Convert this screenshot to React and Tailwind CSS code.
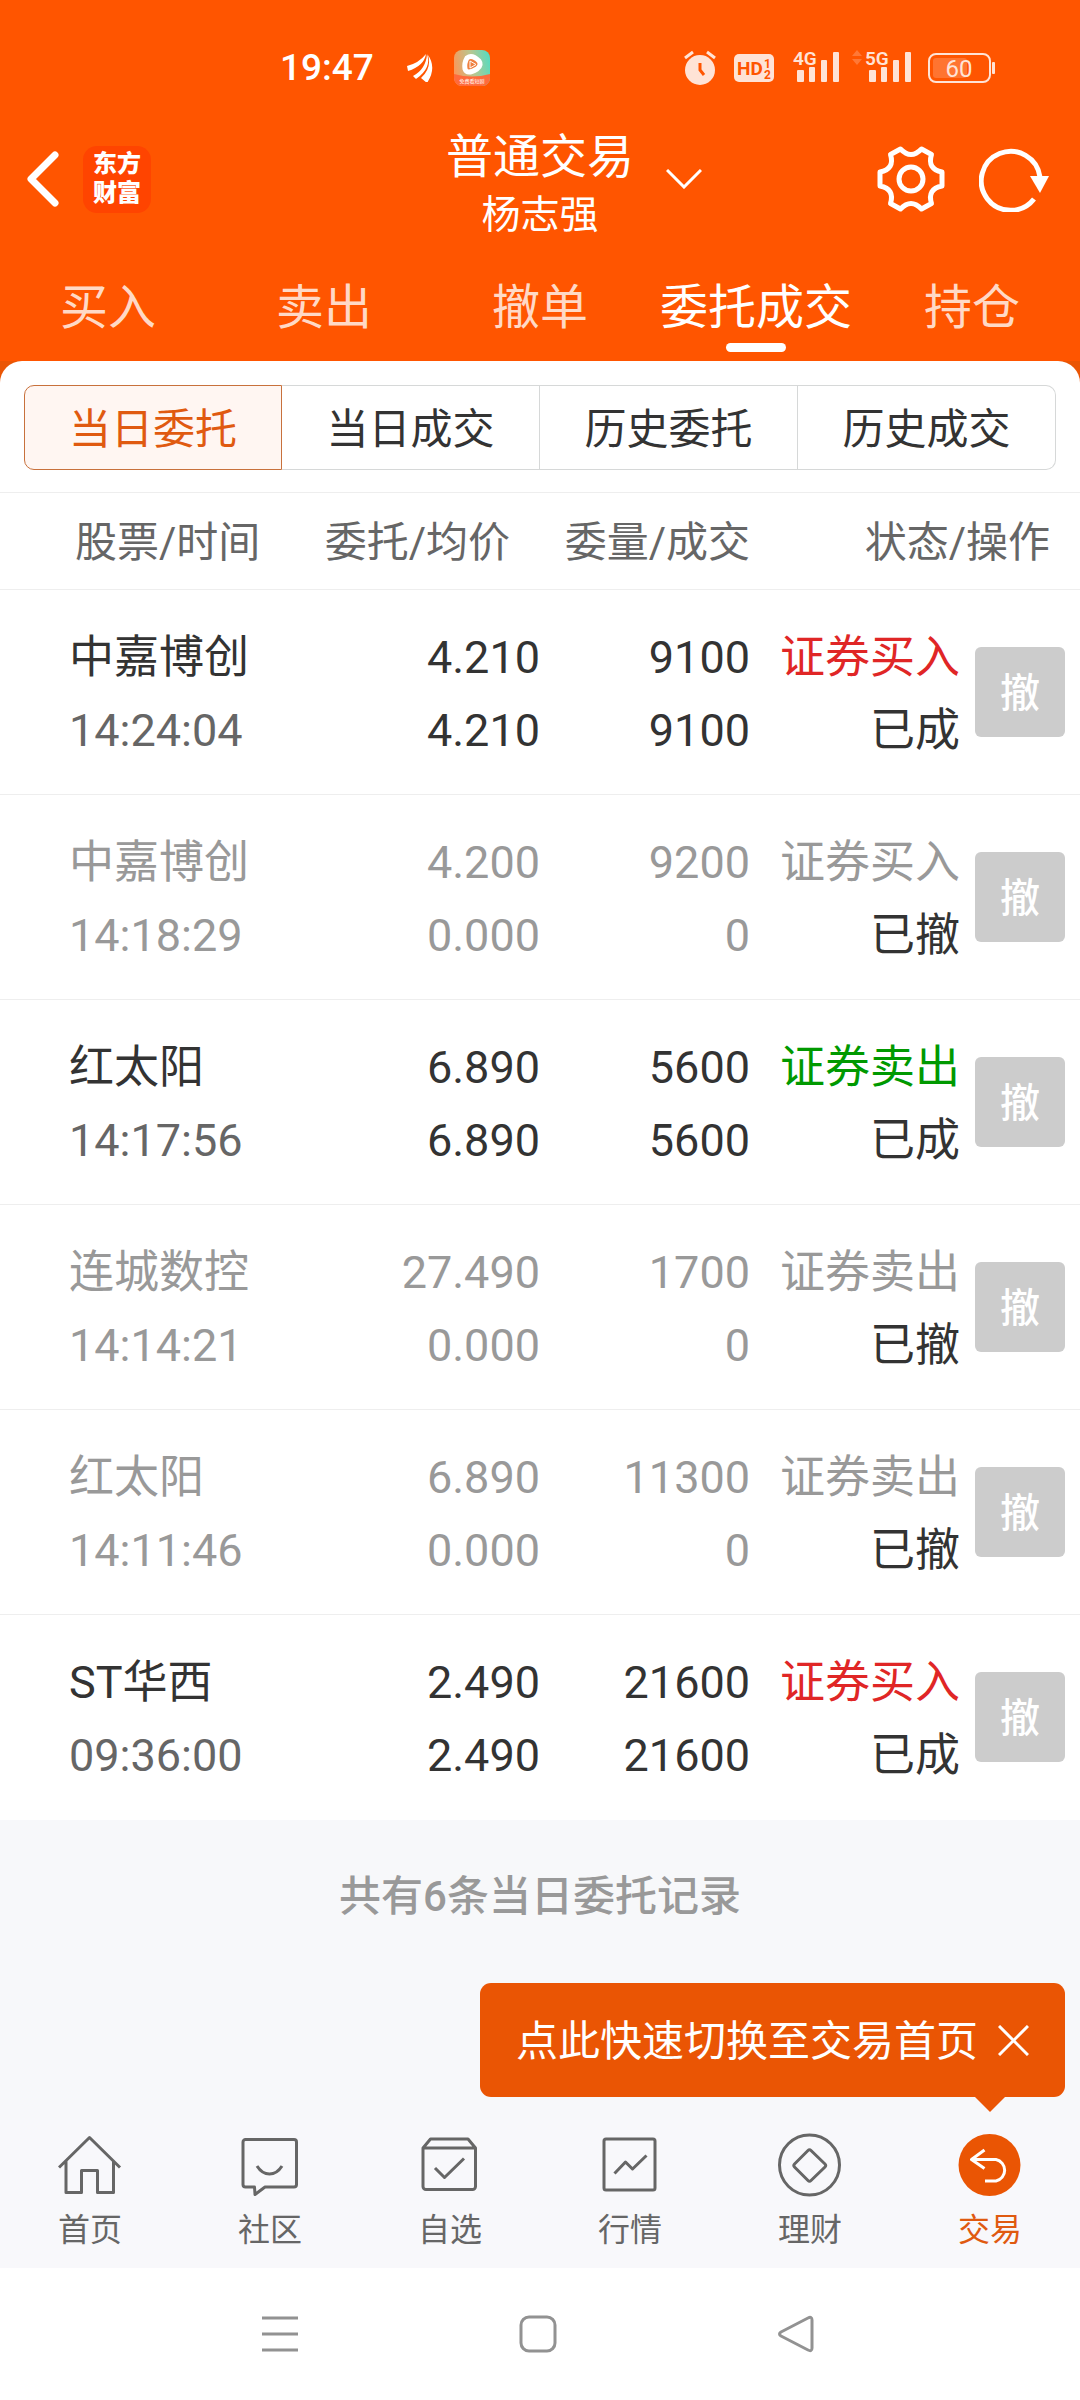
// Order list page — today's orders with cancel actions
import React, { useState } from 'react';
import clsx from 'clsx';

const TABS = ['买入', '卖出', '撤单', '委托成交', '持仓'];
const FILTERS = ['当日委托', '当日成交', '历史委托', '历史成交'];

const ORDERS = [
    { name: '中嘉博创', time: '14:24:04', price: '4.210', avg: '4.210', qty: '9100', filled: '9100', side: 'buy', done: true },
    { name: '中嘉博创', time: '14:18:29', price: '4.200', avg: '0.000', qty: '9200', filled: '0', side: 'buy', done: false },
    { name: '红太阳', time: '14:17:56', price: '6.890', avg: '6.890', qty: '5600', filled: '5600', side: 'sell', done: true },
    { name: '连城数控', time: '14:14:21', price: '27.490', avg: '0.000', qty: '1700', filled: '0', side: 'sell', done: false },
    { name: '红太阳', time: '14:11:46', price: '6.890', avg: '0.000', qty: '11300', filled: '0', side: 'sell', done: false },
    { name: 'ST华西', time: '09:36:00', price: '2.490', avg: '2.490', qty: '21600', filled: '21600', side: 'buy', done: true },
];

const NAV_ITEMS = [
    {
        label: '首页',
        icon: <path d="M1 34.5L31.5 4.5L62 34.5M8 28V59.5H23.5V37.5H39.5V59.5H55.5V28" />,
    },
    {
        label: '社区',
        icon: (
            <path d="M7.5 6.5H56a2.5 2.5 0 0 1 2.5 2.5V51.5a2.5 2.5 0 0 1-2.5 2.5H27L17 61.5L16.5 54H7.5A2.5 2.5 0 0 1 5 51.5V9a2.5 2.5 0 0 1 2.5-2.5ZM19 33Q24 41 31.5 41T44 33" />
        ),
    },
    {
        label: '自选',
        icon: (
            <path d="M5 15L12.5 6H50L57.5 15V53.5a3 3 0 0 1-3 3H8a3 3 0 0 1-3-3ZM5 15H57.5M17 35L26.5 44.5L46 25.5" />
        ),
    },
    {
        label: '行情',
        icon: (
            <>
                <rect x="6" y="6" width="51" height="51" rx="2" />
                <path d="M16.5 40.5L27.5 29L34.5 36L48.5 22.5" />
            </>
        ),
    },
    {
        label: '理财',
        icon: (
            <>
                <circle cx="31.5" cy="32" r="30" />
                <path d="M30 17.5Q31.5 16 33 17.5L47 31Q48.5 32.5 47 34L33 47.5Q31.5 49 30 47.5L16.5 34Q15 32.5 16.5 31Z" />
            </>
        ),
    },
    {
        label: '交易',
        active: true,
        icon: (
            <>
                <circle cx="31.5" cy="32" r="31" fill="#ea5504" stroke="none" />
                <path stroke="#fff" d="M26.5 17L13.5 26.5L26.5 35.5M13.5 26.5H38a11 11 0 0 1 0 21.5H27" />
            </>
        ),
    },
];

const Signal = ({ label, arrows }) => (
    <svg width="60" height="48" viewBox="0 -6 60 48" fill="currentColor">
        {arrows && <path opacity="0.25" d="M0 6L5 0L10 6ZM0 9L5 15L10 9Z" />}
        <text x="13" y="15" fontSize="19" fontWeight="600">{label}</text>
        <rect x="17" y="20" width="7" height="12" rx="1" />
        <rect x="29" y="17" width="6" height="15" rx="1" />
        <rect x="41" y="10" width="6" height="22" rx="1" />
        <rect x="53" y="2" width="6" height="30" rx="1" />
    </svg>
);

const StatusBar = () => (
    <div className="flex h-22 items-center justify-between pt-12 pr-[85px] pl-[280px]">
        <div className="flex items-center">
            <span className="text-[37px] leading-10 font-medium text-white">19:47</span>
            <svg className="ml-[33px]" width="26" height="28" viewBox="0 0 26 28" fill="#fff">
                <path d="M0 12Q12 9 19 0Q17 12 1 17Z" />
                <path d="M6 22Q19 15 20 0Q25 14 9 25Z" />
                <path d="M14 24Q25 14 21 1Q30 14 20 29Z" />
            </svg>
            <svg className="ml-[21px]" width="36" height="36" viewBox="0 0 36 36">
                <defs>
                    <linearGradient id="player" x1="0" y1="0.4" x2="1" y2="0.2">
                        <stop offset="0" stopColor="#f79a5c" />
                        <stop offset="0.5" stopColor="#b8c690" />
                        <stop offset="1" stopColor="#55dcc0" />
                    </linearGradient>
                </defs>
                <rect width="36" height="36" rx="8" fill="url(#player)" />
                <path d="M0 24Q18 29 36 24V28a8 8 0 0 1-8 8H8a8 8 0 0 1-8-8Z" fill="#ff6a3c" />
                <path d="M13 8Q18 4 25 11Q28 15 23 19Q13 25 11 19Q10 13 13 8Z" fill="#f08040" stroke="#fff" strokeWidth="5" />
                <path d="M16 11L22 14.5L16 18Z" fill="#f08040" stroke="#fff" />
                <text x="18" y="33" textAnchor="middle" fontSize="5" fill="#fff">免费看短剧</text>
            </svg>
        </div>
        <div className="flex items-center text-[#ffe3d6]">
            <svg width="32" height="36" viewBox="0 0 32 36" fill="none" stroke="currentColor" strokeWidth="3">
                <circle cx="16" cy="20" r="15" fill="currentColor" stroke="none" />
                <path d="M1 8L9 2M31 8L23 2" />
                <path stroke="#ff5500" d="M16 13V20L20 25" />
            </svg>
            <svg className="ml-[18px]" width="40" height="28" viewBox="0 0 40 28">
                <rect width="40" height="28" rx="5" fill="currentColor" />
                <text x="3" y="21" fontSize="19" fontWeight="700" fill="#ff5500">HD</text>
                <text x="30" y="14" fontSize="12" fontWeight="700" fill="#ff5500">1</text>
                <text x="30" y="25" fontSize="12" fontWeight="700" fill="#ff5500">2</text>
            </svg>
            <span className="ml-[6px] flex gap-3">
                <Signal label="4G" />
                <Signal label="5G" arrows />
            </span>
            <svg className="ml-4" width="67" height="30" viewBox="0 0 67 30">
                <rect x="1" y="1" width="61" height="28" rx="7" fill="none" stroke="currentColor" strokeWidth="2" />
                <rect x="5" y="5" width="34" height="20" rx="3" fill="#ff7430" />
                <rect x="64" y="9" width="3" height="12" rx="1" fill="currentColor" />
                <text x="31" y="24" textAnchor="middle" fontSize="24" fill="currentColor">60</text>
            </svg>
        </div>
    </div>
);

const Header = () => (
    <div className="grid h-[182px] grid-cols-[1fr_auto_1fr] items-center text-white">
        <div className="flex items-center gap-6 pl-[26px]">
            <button type="button" aria-label="返回">
                <svg width="33" height="56" viewBox="0 0 33 56" fill="none" stroke="currentColor" strokeWidth="7" strokeLinecap="round" strokeLinejoin="round">
                    <path d="M29 4L5 28L29 52" />
                </svg>
            </button>
            <div className="flex h-[67px] w-[68px] flex-col items-center justify-center rounded-[14px] bg-[#ff4400] text-2xl leading-[29px] font-black">
                <span>东方</span>
                <span>财富</span>
            </div>
        </div>
        <div className="pt-[14px] text-center">
            <h1 className="text-[47px] leading-[59px]">普通交易</h1>
            <p className="text-[39px] leading-[59px]">杨志强</p>
        </div>
        <div className="flex items-center pr-[30px] pl-8">
            <button type="button" aria-label="切换账户">
                <svg width="36" height="20" viewBox="0 0 36 20" fill="none" stroke="currentColor" strokeWidth="3">
                    <path d="M1 1L18 18L35 1" />
                </svg>
            </button>
            <button type="button" aria-label="设置" className="ml-auto">
                <svg width="68" height="68" viewBox="-34 -34 68 68" fill="none" stroke="currentColor" strokeWidth="5" strokeLinejoin="round">
                    <path d="M-10.5 -30Q0 -19 10.5 -30L20.500 -24.5Q16 -10 31 -7V7Q16 10 20.500 24.5L10.500 30Q0 19 -10.500 30L-20.500 24.5Q-16 10 -31 7V-7Q-16 -10 -20.500 -24.5Z" />
                    <circle r="12" />
                </svg>
            </button>
            <button type="button" aria-label="刷新" className="ml-[34px]">
                <svg width="71" height="66" viewBox="0 0 71 66" fill="none" stroke="currentColor" strokeWidth="5">
                    <path d="M55 53A29.5 29.5 0 1 1 61 31" />
                    <path d="M51 30H70L61 47Z" fill="currentColor" stroke="none" />
                </svg>
            </button>
        </div>
    </div>
);

const OrderRow = ({ order }) => {
    const main = order.done ? 'text-[#333333]' : 'text-[#999999]';
    const sideColor = order.side === 'buy' ? 'text-[#e02626]' : 'text-[#009900]';

    return (
        <tr className="h-[205px] border-b border-[#eeeeee] text-[45px] leading-[73px] last:border-b-0">
            <td className={clsx('pt-1 pl-[69px]', main)}>
                <div>{order.name}</div>
                <div className={order.done ? 'text-[#666666]' : 'text-[#999999]'}>{order.time}</div>
            </td>
            <td className={clsx('pt-1 text-right', main)}>
                <div>{order.price}</div>
                <div>{order.avg}</div>
            </td>
            <td className={clsx('pt-1 text-right', main)}>
                <div>{order.qty}</div>
                <div>{order.filled}</div>
            </td>
            <td className="pt-1 text-right whitespace-nowrap text-[#333333]">
                <div className={order.done ? sideColor : 'text-[#999999]'}>
                    {order.side === 'buy' ? '证券买入' : '证券卖出'}
                </div>
                <div>{order.done ? '已成' : '已撤'}</div>
            </td>
            <td className="pl-[15px]">
                <button type="button" className="flex size-[90px] items-center justify-center rounded-md bg-[#cccccc] pt-1 text-[40px] leading-none font-medium text-white">
                    撤
                </button>
            </td>
        </tr>
    );
};

const App = () => {
    const [tab, setTab] = useState('委托成交');
    const [filter, setFilter] = useState('当日委托');
    const [showTip, setShowTip] = useState(true);

    return (
        <div className="flex min-h-screen flex-col bg-[#f7f8fa] font-[Roboto,'Noto_Sans_CJK_SC',sans-serif]">
            <header className="bg-[#ff5500]">
                <StatusBar />
                <Header />
                <nav className="grid h-[91px] grid-cols-5">
                    {TABS.map((item) => (
                        <button
                            key={item}
                            type="button"
                            onClick={() => setTab(item)}
                            className={clsx(
                                'flex flex-col items-center pt-[3px] text-5xl leading-[70px] whitespace-nowrap',
                                tab === item ? 'text-white' : 'text-[#ffd9c6]'
                            )}
                        >
                            {item}
                            {tab === item && <span className="h-[9px] w-15 rounded-full bg-white" />}
                        </button>
                    ))}
                </nav>
            </header>

            <main className="bg-[#ea5504]">
                <div className="rounded-t-[22px] bg-white">
                    <div className="px-6 pt-6 pb-[22px]">
                        <div className="grid h-[85px] grid-cols-4">
                            {FILTERS.map((item) => (
                                <button
                                    key={item}
                                    type="button"
                                    onClick={() => setFilter(item)}
                                    className={clsx(
                                        'border pt-1 text-[42px] leading-none first:rounded-l-[10px] last:rounded-r-[10px]',
                                        filter === item
                                            ? 'border-[#c8713c] bg-[#fff6f2] text-[#e05a10]'
                                            : 'border-[#d6d8d8] text-[#333333] not-first:border-l-0'
                                    )}
                                >
                                    {item}
                                </button>
                            ))}
                        </div>
                    </div>

                    <table className="w-full table-fixed border-collapse">
                        <colgroup>
                            <col />
                            <col className="w-[240px]" />
                            <col className="w-[210px]" />
                            <col className="w-[210px]" />
                            <col className="w-[120px]" />
                        </colgroup>
                        <thead>
                            <tr className="h-[97px] border-y border-[#eeeeee] text-[42px] leading-none whitespace-nowrap text-[#666666]">
                                <th className="pt-1 pl-[75px] text-left font-normal">股票/时间</th>
                                <th className="pt-1 pr-[30px] text-right font-normal">委托/均价</th>
                                <th className="pt-1 text-right font-normal">委量/成交</th>
                                <th colSpan={2} className="pt-1 pr-[30px] text-right font-normal">状态/操作</th>
                            </tr>
                        </thead>
                        <tbody>
                            {ORDERS.map((order) => (
                                <OrderRow key={order.time} order={order} />
                            ))}
                        </tbody>
                    </table>
                </div>
            </main>

            <p className="py-12 text-center text-[42px] leading-[58px] font-medium text-[#999999]">
                共有{ORDERS.length}条当日委托记录
            </p>

            <footer className="relative mt-auto">
                {/* Tip bubble pointing at the trade item */}
                {showTip && (
                    <div className="absolute right-[15px] bottom-full mb-[23px] flex h-[114px] items-center gap-5 rounded-[11px] bg-[#ea5504] px-9 text-[42px] leading-none text-white">
                        <span className="pt-1">点此快速切换至交易首页</span>
                        <button type="button" aria-label="关闭" onClick={() => setShowTip(false)}>
                            <svg width="31" height="31" viewBox="0 0 31 31" stroke="currentColor" strokeWidth="3">
                                <path d="M1 1L30 30M30 1L1 30" />
                            </svg>
                        </button>
                        <svg className="absolute top-full right-[60px]" width="30" height="15" viewBox="0 0 30 15" fill="#ea5504">
                            <path d="M0 0H30L15 15Z" />
                        </svg>
                    </div>
                )}
                <nav className="grid h-[148px] grid-cols-6 bg-[#f8f8fb] pt-[13px]">
                    {NAV_ITEMS.map((item) => (
                        <a
                            key={item.label}
                            href="#"
                            className={clsx(
                                'flex flex-col items-center gap-[9px] text-[32px] leading-12',
                                item.active ? 'text-[#e05a10]' : 'text-[#666666]'
                            )}
                        >
                            <svg width="64" height="64" viewBox="0 0 64 64" fill="none" stroke="currentColor" strokeWidth="3" strokeLinejoin="round">
                                {item.icon}
                            </svg>
                            {item.label}
                        </a>
                    ))}
                </nav>
                <div className="flex h-33 items-center justify-center gap-[220px] bg-white pr-1 text-[#929292]">
                    <button type="button" aria-label="最近任务">
                        <svg width="38" height="38" viewBox="0 0 38 38" stroke="currentColor" strokeWidth="3">
                            <path d="M1 3H37M1 19H37M1 35H37" />
                        </svg>
                    </button>
                    <button type="button" aria-label="主屏幕">
                        <svg width="38" height="38" viewBox="0 0 38 38" fill="none" stroke="currentColor" strokeWidth="3">
                            <rect x="2" y="2" width="34" height="34" rx="8" />
                        </svg>
                    </button>
                    <button type="button" aria-label="返回上一级">
                        <svg width="38" height="38" viewBox="0 0 38 38" fill="none" stroke="currentColor" strokeWidth="3" strokeLinejoin="round">
                            <path d="M31 3Q35 1 35 5V33Q35 37 31 35L4 21Q1 19 4 17Z" />
                        </svg>
                    </button>
                </div>
            </footer>
        </div>
    );
};

export default App;
